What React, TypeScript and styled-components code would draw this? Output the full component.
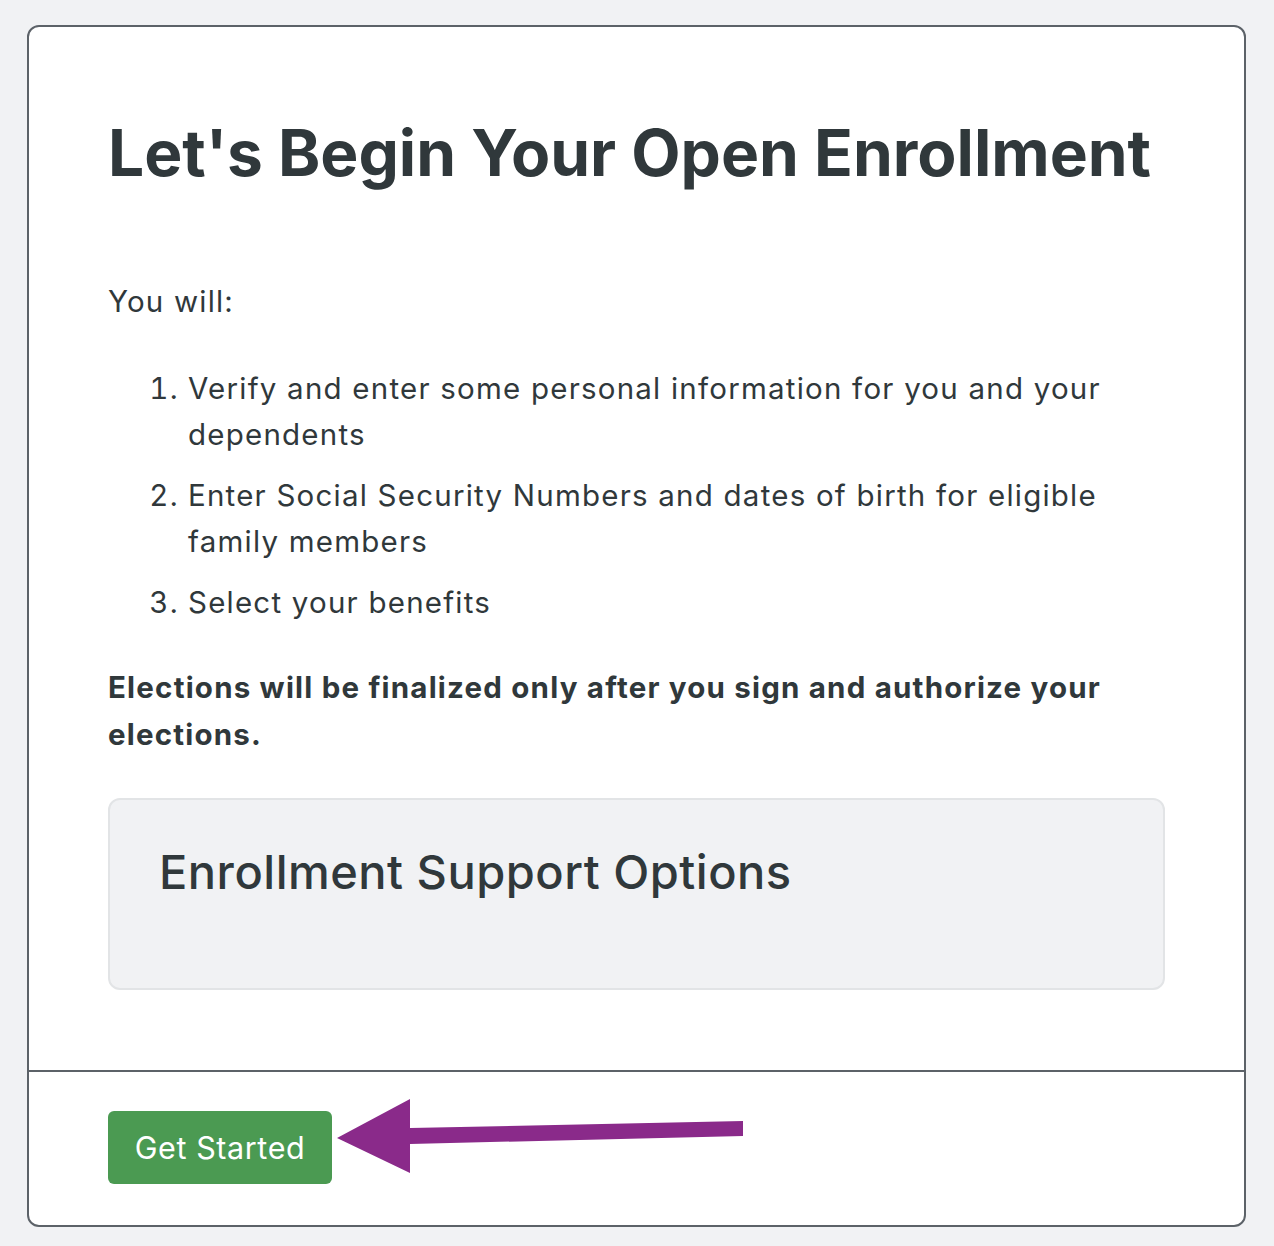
import React from "react";
import styled, { createGlobalStyle } from "styled-components";

const Global = createGlobalStyle`
  html, body { margin: 0; padding: 0; background: #f1f2f4; }
  body { font-family: Inter, "Noto Sans", sans-serif; color: #30383b; }
`;

const Page = styled.div`
  padding: 25px 28px 20px 27px;
`;

const Card = styled.section`
  background: #ffffff;
  border: 2px solid #5c6268;
  border-radius: 12px;
  overflow: hidden;
`;

const Body = styled.div`
  padding: 88px 79px 80px 79px;
`;

const Title = styled.h1`
  margin: 0 0 86px 0;
  font-size: 64px;
  line-height: 1.2;
  font-weight: 700;
  letter-spacing: 0;
  color: #30383b;
`;

const Para = styled.p<{ $bold?: boolean }>`
  margin: 0;
  font-size: 29.5px;
  line-height: 47px;
  letter-spacing: ${(p) => (p.$bold ? "1.2px" : "1.2px")};
  font-weight: ${(p) => (p.$bold ? 700 : 400)};
`;

const Steps = styled.ol`
  margin: 40px 0 39px 0;
  padding: 0 0 0 80px;
  font-size: 29.5px;
  line-height: 46px;
  letter-spacing: 1.22px;
`;

const Step = styled.li`
  margin: 0 0 15px 0;
  padding-left: 0;
  &:last-child { margin-bottom: 0; }
`;

const SupportBox = styled.div`
  margin-top: 40px;
  background: #f1f2f4;
  border: 2px solid #e2e4e6;
  border-radius: 12px;
  padding: 44px 49px 0 49px;
  box-sizing: border-box;
  height: 192px;
`;

const SupportTitle = styled.h2`
  margin: 0;
  font-size: 47px;
  line-height: 56px;
  font-weight: 500;
  letter-spacing: 0.5px;
  color: #30383b;
`;

const Footer = styled.div`
  position: relative;
  border-top: 2px solid #5c6268;
  padding: 39px 79px 41px 79px;
`;

const Button = styled.button`
  display: inline-flex;
  align-items: center;
  justify-content: center;
  width: 224px;
  height: 73px;
  border: none;
  border-radius: 6px;
  background: #4b9a52;
  color: #ffffff;
  font-family: Inter, "Noto Sans", sans-serif;
  font-size: 30.5px;
  letter-spacing: 0.6px;
  font-weight: 400;
  padding: 0;
  cursor: pointer;
`;

const Arrow = styled.svg`
  position: absolute;
  left: 300px;
  top: 18px;
  overflow: visible;
`;

export default function App() {
  return (
    <>
      <Global />
      <Page>
        <Card>
          <Body>
            <Title>Let's Begin Your Open Enrollment</Title>
            <Para>You will:</Para>
            <Steps>
              <Step>Verify and enter some personal information for you and your dependents</Step>
              <Step>Enter Social Security Numbers and dates of birth for eligible family members</Step>
              <Step>Select your benefits</Step>
            </Steps>
            <Para $bold>Elections will be finalized only after you sign and authorize your elections.</Para>
            <SupportBox>
              <SupportTitle>Enrollment Support Options</SupportTitle>
            </SupportBox>
          </Body>
          <Footer>
            <Button>Get Started</Button>
            <Arrow width="420" height="90" viewBox="0 0 420 90">
              <polygon
                points="8,48 81,9 81,38 414,31 414,46 81,54 81,83"
                fill="#8a2a8a"
              />
            </Arrow>
          </Footer>
        </Card>
      </Page>
    </>
  );
}
